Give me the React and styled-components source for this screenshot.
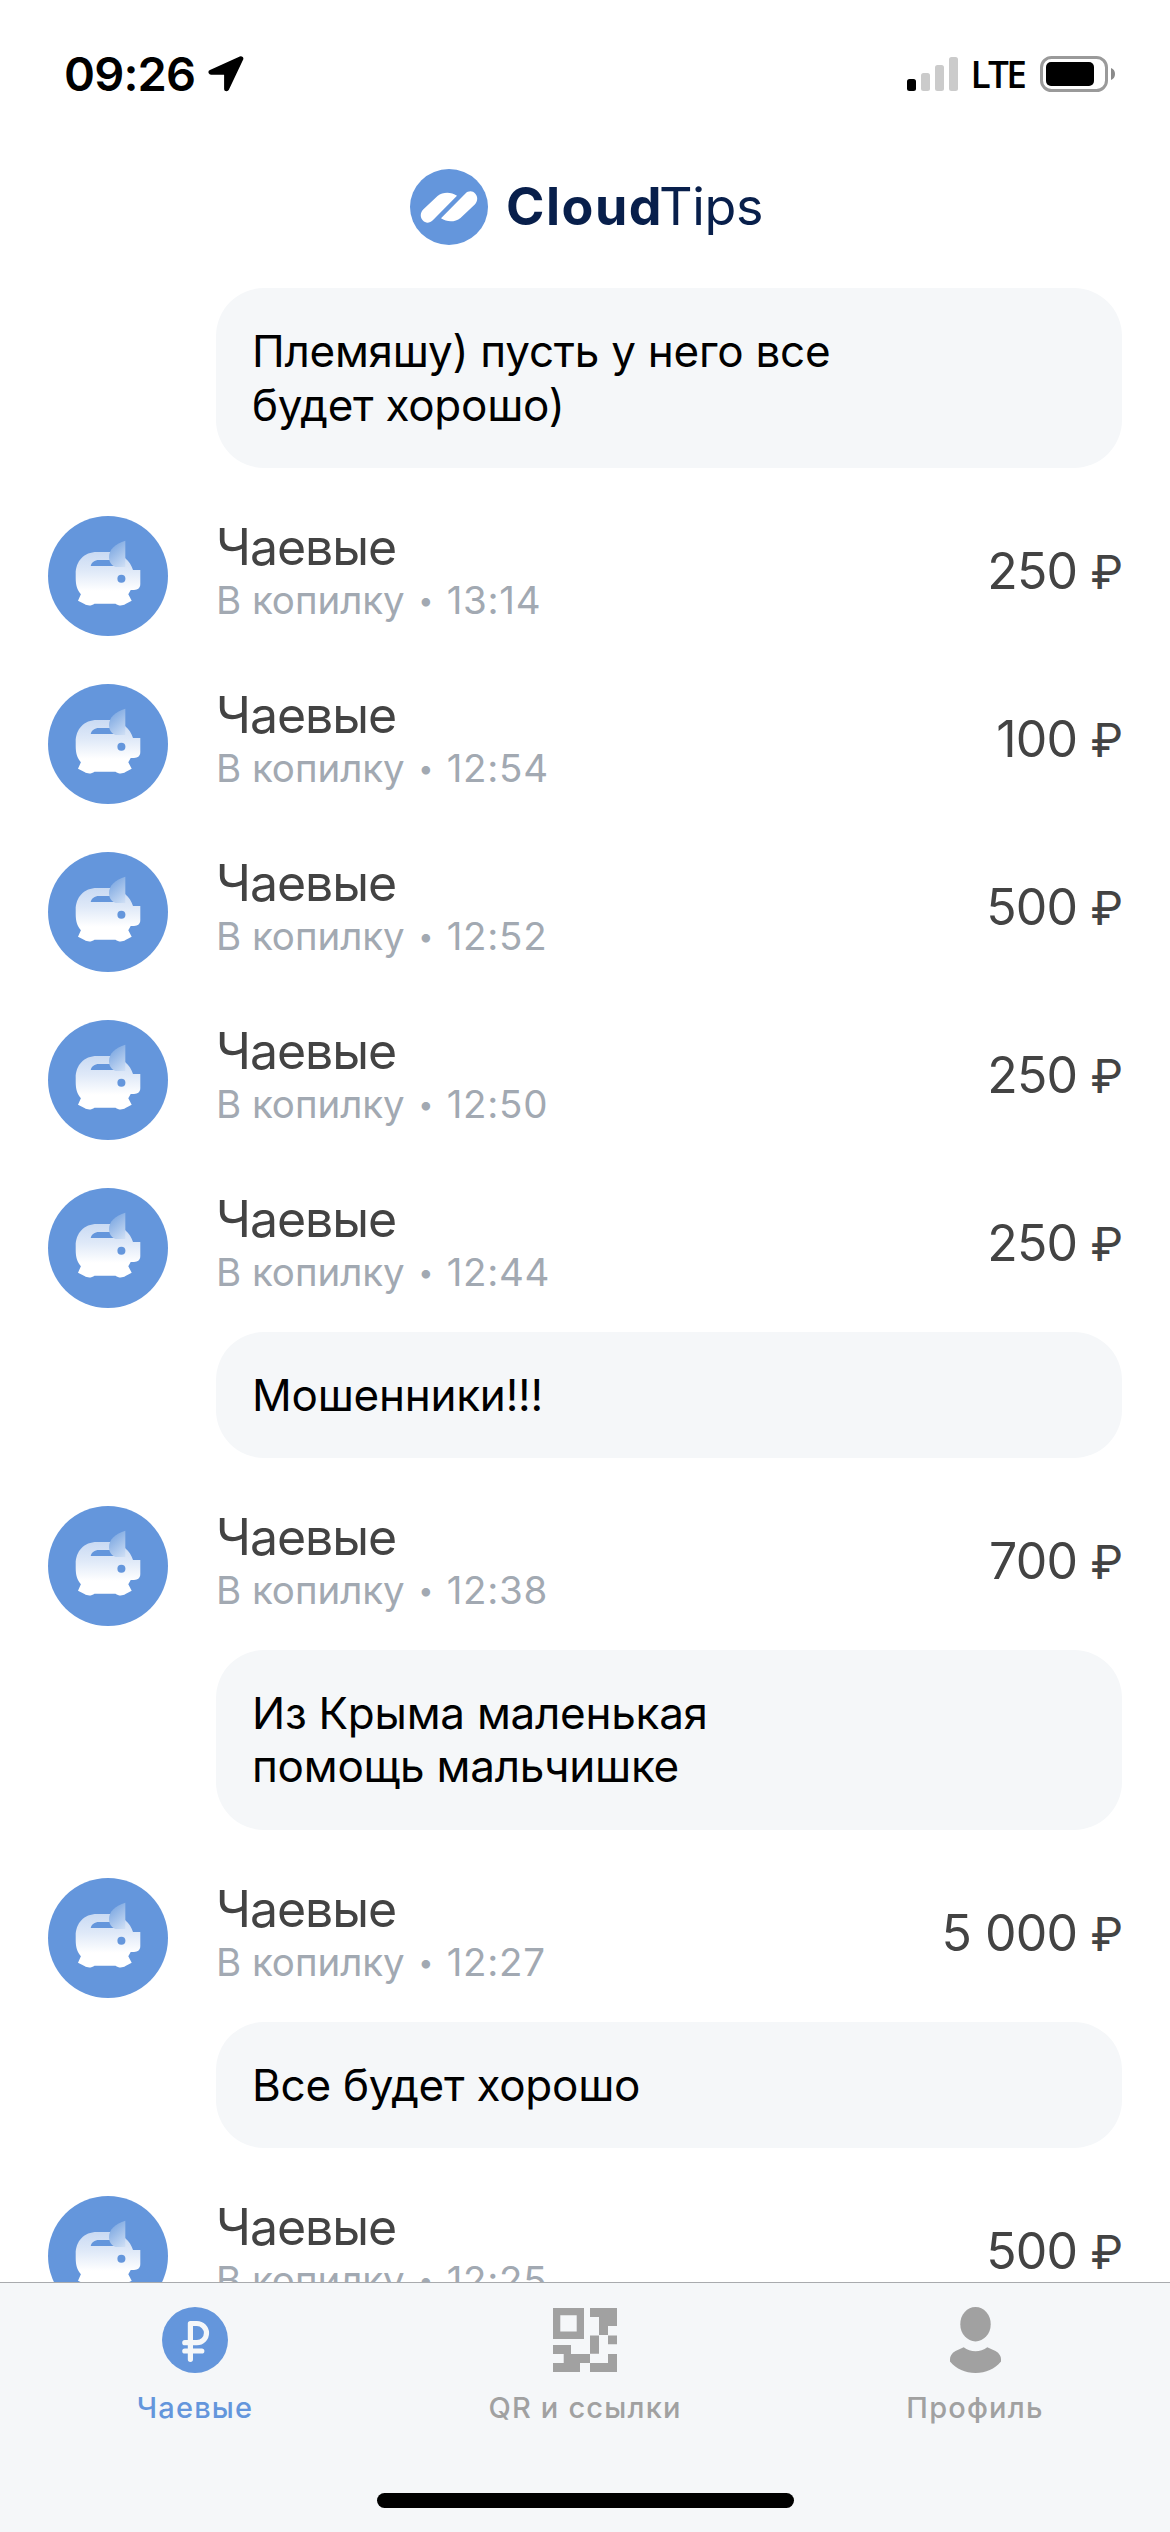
import React from "react"
import styled, {createGlobalStyle, css} from "styled-components"

const colors = {
  blue: "#6496dc",
  navy: "#081f4b",
  text: "#434343",
  muted: "#a2a9b2",
  surface: "#f5f7f9",
  inactive: "#a1a1a1",
}

const GlobalStyle = createGlobalStyle`
  * {
    box-sizing: border-box;
  }

  body {
    margin: 0;
    background: #ffffff;
    font-family: "Inter", sans-serif;
  }

  svg {
    display: block;
    flex-shrink: 0;
  }
`

const Screen = styled.div`
  display: flex;
  flex-direction: column;
  width: 1170px;
  height: 2532px;
  overflow: hidden;
  background: #ffffff;
`

// Status bar
const StatusBar = styled.div`
  display: flex;
  justify-content: space-between;
  align-items: center;
  height: 60px;
  margin-top: 44px;
  padding: 0 55px 0 64px;
  flex-shrink: 0;
`

const StatusGroup = styled.div`
  display: flex;
  align-items: center;
`

const Clock = styled.span`
  width: 144px;
  font-size: 47px;
  font-weight: 600;
  line-height: 60px;
  letter-spacing: -0.83px;
  color: black;
`

const Network = styled.span`
  width: 69.5px;
  margin-left: 12.5px;
  font-family: "Open Sans", sans-serif;
  font-size: 37px;
  font-weight: 600;
  line-height: 60px;
  letter-spacing: -2.6px;
  color: black;
`

// Logo
const Header = styled.header`
  display: flex;
  justify-content: flex-start;
  height: 184px;
  padding: 65px 0 0 410px;
  flex-shrink: 0;
`

const LogoText = styled.div`
  display: flex;
  margin-left: 18px;
  font-size: 52px;
  line-height: 76px;
  color: ${colors.navy};
`

const LogoBold = styled.span`
  font-weight: 700;
  letter-spacing: 1.5px;
`

const LogoLight = styled.span`
  margin-left: -4px;
  font-weight: 400;
  letter-spacing: -0.33px;
`

// Payments
const List = styled.main`
  display: flex;
  flex-direction: column;
  flex: 1;
  min-height: 0;
  padding: 0 48px;
  overflow: hidden;
`

const Row = styled.div`
  display: flex;
  align-items: flex-start;
  height: 168px;
  padding: 24px 0;
  flex-shrink: 0;
`

const Details = styled.div`
  display: flex;
  flex-direction: column;
  flex: 1;
  margin-left: 48px;
  padding-top: 1px;
`

const Title = styled.div`
  font-size: 50px;
  line-height: 60px;
  letter-spacing: -1.06px;
  color: ${colors.text};
`

const Meta = styled.div`
  display: flex;
  align-items: center;
  font-size: 38.5px;
  line-height: 47px;
  color: ${colors.muted};
`

const Source = styled.span`
  letter-spacing: -0.05px;
`

const Dot = styled.span`
  width: 42px;
  font-size: 27px;
  text-align: center;
`

const Time = styled.span`
  letter-spacing: 0.7px;
`

const Amount = styled.div`
  display: flex;
  align-items: baseline;
  margin-right: -1px;
  padding-top: 25px;
  font-size: 50px;
  line-height: 60px;
  letter-spacing: -0.74px;
  word-spacing: 0.5px;
  white-space: nowrap;
  color: ${colors.text};
`

const Currency = styled.span`
  margin-left: 13px;
  font-size: 46.5px;
  letter-spacing: 0;
`

const Bubble = styled.div`
  margin-left: 168px;
  padding: 37px 36px 35.4px;
  border-radius: 48px;
  background: ${colors.surface};
  font-size: 44px;
  line-height: 53.67px;
  letter-spacing: -0.25px;
  white-space: pre-line;
  color: black;
  flex-shrink: 0;
  ${props => props.$spaced && css`
    margin-bottom: 24px;
  `}
`

// Bottom navigation
const TabBar = styled.nav`
  display: flex;
  flex-direction: column;
  justify-content: space-between;
  height: 250px;
  border-top: 1px solid #a9abae;
  background: ${colors.surface};
  flex-shrink: 0;
`

const Tabs = styled.div`
  display: grid;
  grid-template-columns: repeat(3, 1fr);
  padding-top: 24px;
`

const Tab = styled.div`
  display: flex;
  flex-direction: column;
  align-items: center;
  color: ${props => props.$active ? colors.blue : colors.inactive};
`

const TabIcon = styled.div`
  display: flex;
  align-items: center;
  justify-content: center;
  height: 66px;
`

const TabLabel = styled.span`
  margin-top: 17px;
  font-size: 29px;
  font-weight: 500;
  line-height: 36px;
  letter-spacing: 1.2px;
`

const HomeIndicator = styled.div`
  width: 417px;
  height: 15px;
  margin: 0 auto 24px;
  border-radius: 8px;
  background: black;
`

const LocationIcon = () => (
  <svg width="36" height="36" viewBox="0 0 36 36">
    <path
      d="M32.8 2.8 L3 16.2 H18.6 V32.8 Z"
      fill="black"
      stroke="black"
      strokeWidth="5"
      strokeLinejoin="round"
    />
  </svg>
)

const SignalIcon = () => (
  <svg width="51" height="34" viewBox="0 0 51 34">
    <rect x="0" y="22" width="9" height="12" rx="2.5" fill="black" />
    <rect x="14" y="16" width="9" height="18" rx="2.5" fill="#cbcbcb" />
    <rect x="28" y="8" width="9" height="26" rx="2.5" fill="#cbcbcb" />
    <rect x="42" y="0" width="9" height="34" rx="2.5" fill="#cbcbcb" />
  </svg>
)

const BatteryIcon = () => (
  <svg width="75" height="36" viewBox="0 0 75 36">
    <rect x="1.5" y="1.5" width="65" height="33" rx="10" fill="none" stroke="#9a9a9a" strokeWidth="3" />
    <rect x="6" y="6" width="48" height="24" rx="5" fill="black" />
    <path d="M71 12 C73.6 13 75 15.2 75 18 C75 20.8 73.6 23 71 24 Z" fill="#8a8a8a" />
  </svg>
)

const LogoIcon = () => (
  <svg width="78" height="76" viewBox="0 0 78 76">
    <ellipse cx="39" cy="38" rx="39" ry="38" fill={colors.blue} />
    <path
      d="M47 26.7 C41 22.6 33 22.6 27.5 27 L13.2 40.6 C10 44 10 48.6 12.9 51.6 C15.6 54.6 19.8 54.3 22.8 51.3 Z"
      fill="white"
    />
    <path
      d="M31 49.3 C37 53.4 45 53.4 50.5 49 L64.8 35.4 C68 32 68 27.4 65.1 24.4 C62.4 21.4 58.2 21.7 55.2 24.7 Z"
      fill="white"
    />
  </svg>
)

const PiggyIcon = ({id}) => (
  <svg width="120" height="120" viewBox="0 0 120 120">
    <defs>
      <linearGradient id={`body-${id}`} x1="0" y1="36" x2="0" y2="90" gradientUnits="userSpaceOnUse">
        <stop offset="0" stopColor="#c9daf3" />
        <stop offset="0.35" stopColor="#dfe9f8" />
        <stop offset="0.72" stopColor="#ffffff" />
      </linearGradient>
      <linearGradient id={`ear-${id}`} x1="63" y1="32" x2="78" y2="50" gradientUnits="userSpaceOnUse">
        <stop offset="0" stopColor="#83ace3" />
        <stop offset="1" stopColor="#cfdff5" />
      </linearGradient>
    </defs>
    <circle cx="60" cy="60" r="60" fill={colors.blue} />
    <path
      fillRule="evenodd"
      d="M49 36 H66 L77.3 42.3 C81 45.5 83.6 49.5 85 54 H92.3 V68 C92.3 72 90 73.9 86 73.9 H82.7 L80.3 78.3 L83.7 84.7 L77.5 88 C74.5 90 70.5 90 67.5 87.7 H46.5 C43.5 90 39.5 90 36.5 88 L30 84.7 L32.9 78.3 C29 73.5 27.7 69 27.7 62 V58 C27.7 45 36 36 49 36 Z M42.7 50 H67 L62 44 H51 C46.5 44 43.5 46.5 42.7 50 Z"
      fill={`url(#body-${id})`}
    />
    <path
      d="M77.3 24.7 C67.5 27.5 61 33.5 61 41 C61 46 63.5 49.5 67.5 51 H77.3 Z"
      fill={`url(#ear-${id})`}
    />
    <circle cx="73.4" cy="62.7" r="4" fill={colors.blue} />
  </svg>
)

const RubleIcon = () => (
  <svg width="66" height="66" viewBox="0 0 66 66">
    <circle cx="33" cy="33" r="33" fill="currentColor" />
    <path
      d="M22.8 35.7 H34.9 A9.6 9.6 0 0 0 34.9 16.5 H28.4 V52.3 M22.8 44 H39.8"
      fill="none"
      stroke={colors.surface}
      strokeWidth="5.2"
      strokeLinecap="round"
      strokeLinejoin="round"
    />
  </svg>
)

const QrIcon = () => (
  <svg width="64" height="64" viewBox="0 0 64 64" fill="currentColor">
    <path fillRule="evenodd" d="M0 0 H31 V31 H0 Z M7.3 7.3 V23.5 H23.7 V7.3 Z" />
    <path d="M37 0 H64 V18 H55 V27 H46 V9 H37 Z" />
    <path d="M37 27.5 H46 V45.7 H37 Z M55 27.5 H64 V36.3 H55 Z" />
    <path d="M0 37 H18 V46 H37 V55 H27 V64 H0 V55 H10.7 V46 H0 Z" />
    <path d="M55 46 H64 V64 H37 V55 H55 Z" />
  </svg>
)

const ProfileIcon = () => (
  <svg width="51" height="66" viewBox="0 0 51 66" fill="currentColor">
    <ellipse cx="25.5" cy="17.2" rx="15.2" ry="17.2" />
    <path d="M13.7 40.2 C20.5 45.6 30.5 45.6 37.3 40.2 L45.5 44 C49.5 46.3 51 49.5 51 52 V54.5 C44.5 62 36 66 25.5 66 C15 66 6.5 62 0 54.5 V52 C0 49.5 1.5 46.3 5.5 44 Z" />
  </svg>
)

const Payment = ({id, time, amount}) => (
  <Row>
    <PiggyIcon id={id} />
    <Details>
      <Title>Чаевые</Title>
      <Meta>
        <Source>В копилку</Source>
        <Dot>•</Dot>
        <Time>{time}</Time>
      </Meta>
    </Details>
    <Amount>
      {amount}
      <Currency>₽</Currency>
    </Amount>
  </Row>
)

const payments = [
  {time: "13:14", amount: "250"},
  {time: "12:54", amount: "100"},
  {time: "12:52", amount: "500"},
  {time: "12:50", amount: "250"},
  {time: "12:44", amount: "250", comment: "Мошенники!!!"},
  {time: "12:38", amount: "700", comment: "Из Крыма маленькая\nпомощь мальчишке"},
  {time: "12:27", amount: "5 000", comment: "Все будет хорошо"},
  {time: "12:25", amount: "500"},
]

const App = () => {
  return(
    <Screen>
      <GlobalStyle />

      <StatusBar>
        <StatusGroup>
          <Clock>09:26</Clock>
          <LocationIcon />
        </StatusGroup>
        <StatusGroup>
          <SignalIcon />
          <Network>LTE</Network>
          <BatteryIcon />
        </StatusGroup>
      </StatusBar>

      <Header>
        <LogoIcon />
        <LogoText>
          <LogoBold>Cloud</LogoBold>
          <LogoLight>Tips</LogoLight>
        </LogoText>
      </Header>

      <List>
        <Bubble $spaced>{"Племяшу) пусть у него все\nбудет хорошо)"}</Bubble>
        {payments.map((p, i) => (
          <React.Fragment key={p.time}>
            <Payment id={i} time={p.time} amount={p.amount} />
            {p.comment && <Bubble $spaced>{p.comment}</Bubble>}
          </React.Fragment>
        ))}
      </List>

      <TabBar>
        <Tabs>
          <Tab $active>
            <TabIcon><RubleIcon /></TabIcon>
            <TabLabel>Чаевые</TabLabel>
          </Tab>
          <Tab>
            <TabIcon><QrIcon /></TabIcon>
            <TabLabel>QR и ссылки</TabLabel>
          </Tab>
          <Tab>
            <TabIcon><ProfileIcon /></TabIcon>
            <TabLabel>Профиль</TabLabel>
          </Tab>
        </Tabs>
        <HomeIndicator />
      </TabBar>
    </Screen>
  )
}

export default App
